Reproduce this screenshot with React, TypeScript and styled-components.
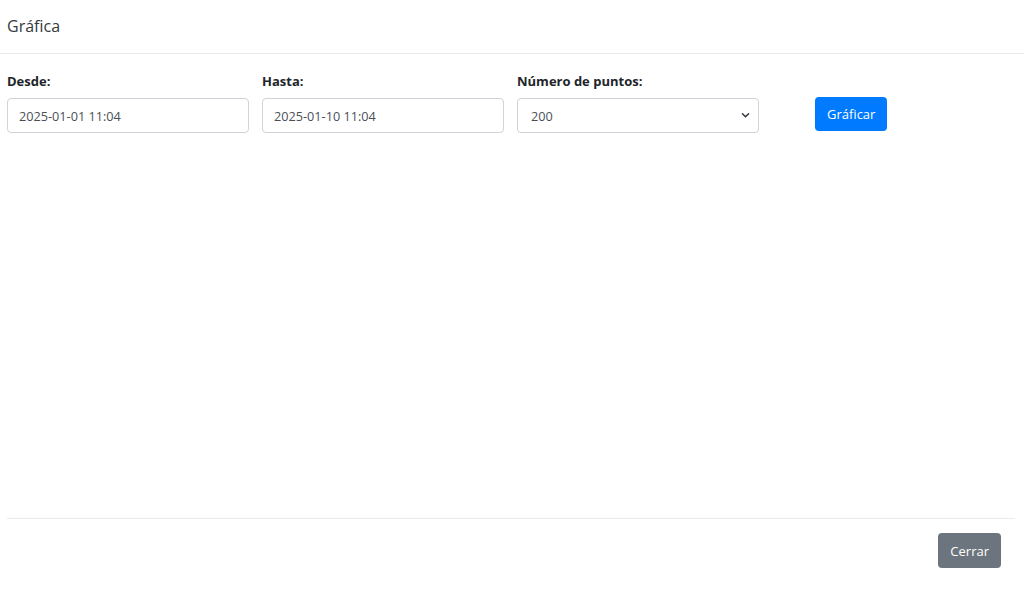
import styled, { createGlobalStyle } from "styled-components";

const GlobalStyle = createGlobalStyle`
  html, body {
    margin: 0;
    padding: 0;
    background: #fff;
    font-family: "Open Sans", "Noto Sans", sans-serif;
    color: #212529;
  }
`;

const Page = styled.div`
  min-height: 100vh;
  display: flex;
  flex-direction: column;
  box-sizing: border-box;
`;

const Header = styled.div`
  height: 54px;
  display: flex;
  align-items: center;
  padding: 0 7px;
  border-bottom: 1px solid #e9ecef;
  padding-bottom: 2px;
  box-sizing: border-box;
`;

const Title = styled.h5`
  margin: 0;
  font-size: 16px;
  font-weight: 400;
  color: #343a40;
`;

const Body = styled.div`
  flex: 1;
  padding: 18px 7px 0;
`;

const Form = styled.div`
  display: grid;
  grid-template-columns: 242px 242px 242px auto;
  column-gap: 13px;
  align-items: end;
`;

const Field = styled.div`
  display: flex;
  flex-direction: column;
`;

const Label = styled.label`
  font-size: 13px;
  font-weight: 700;
  line-height: 18px;
  margin-bottom: 8px;
  color: #212529;
`;

const Input = styled.input`
  height: 35px;
  box-sizing: border-box;
  border: 1px solid #ced4da;
  border-radius: 4px;
  padding: 0 11px;
  font-family: inherit;
  font-size: 12.7px;
  color: #495057;
  outline: none;
`;

const SelectWrap = styled.div`
  position: relative;
  height: 35px;
`;

const Select = styled.select`
  width: 100%;
  height: 35px;
  box-sizing: border-box;
  border: 1px solid #ced4da;
  border-radius: 4px;
  padding: 0 13px;
  font-family: inherit;
  font-size: 12.7px;
  color: #495057;
  background: #fff;
  appearance: none;
  outline: none;
`;

const Chevron = styled.svg`
  position: absolute;
  right: 9px;
  top: 14px;
  pointer-events: none;
`;

const Button = styled.button<{ $variant: "primary" | "secondary" }>`
  height: 34px;
  box-sizing: border-box;
  padding: 0 12px;
  border: none;
  border-radius: 4px;
  font-family: inherit;
  font-size: 13px;
  color: #fff;
  background: ${(p) => (p.$variant === "primary" ? "#007bff" : "#6c757d")};
  cursor: pointer;
`;

const ActionCell = styled.div`
  padding-left: 43px;
  padding-bottom: 2px;
`;

const Footer = styled.div`
  margin: 0 9px 0 7px;
  border-top: 1px solid #e9ecef;
  padding: 14px 14px 21px 0;
  display: flex;
  justify-content: flex-end;
`;

const CloseButton = styled(Button)`
  height: 35px;
`;

export default function App() {
  return (
    <Page>
      <GlobalStyle />
      <Header>
        <Title>Gráfica</Title>
      </Header>
      <Body>
        <Form>
          <Field>
            <Label>Desde:</Label>
            <Input defaultValue="2025-01-01 11:04" />
          </Field>
          <Field>
            <Label>Hasta:</Label>
            <Input defaultValue="2025-01-10 11:04" />
          </Field>
          <Field>
            <Label>Número de puntos:</Label>
            <SelectWrap>
              <Select defaultValue="200">
                <option value="100">100</option>
                <option value="200">200</option>
                <option value="500">500</option>
              </Select>
              <Chevron width="9" height="7" viewBox="0 0 10 8">
                <path d="M1.5 2 L5 5.5 L8.5 2" fill="none" stroke="#343a40" strokeWidth="1.8" strokeLinecap="round" strokeLinejoin="round" />
              </Chevron>
            </SelectWrap>
          </Field>
          <ActionCell>
            <Button $variant="primary">Gráficar</Button>
          </ActionCell>
        </Form>
      </Body>
      <Footer>
        <CloseButton $variant="secondary">Cerrar</CloseButton>
      </Footer>
    </Page>
  );
}
